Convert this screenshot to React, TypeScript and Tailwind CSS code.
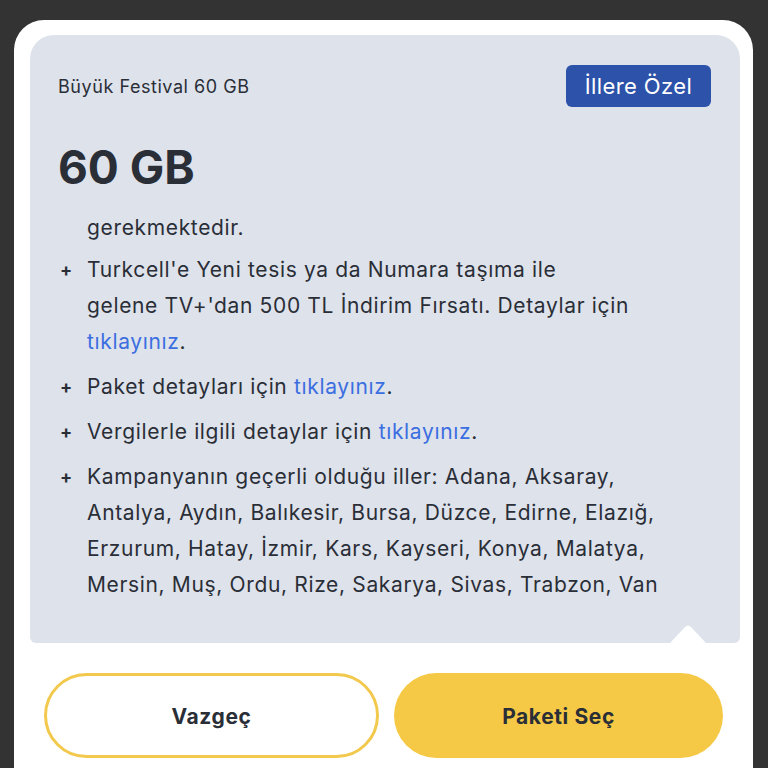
import React from 'react';

const font = { fontFamily: 'Inter, "Noto Sans", sans-serif' };

type Part = string | { link: string };

const items: Part[][][] = [
  [
    ["Turkcell'e Yeni tesis ya da Numara taşıma ile"],
    ["gelene TV+'dan 500 TL İndirim Fırsatı. Detaylar için"],
    [{ link: 'tıklayınız' }, '.'],
  ],
  [['Paket detayları için ', { link: 'tıklayınız' }, '.']],
  [['Vergilerle ilgili detaylar için ', { link: 'tıklayınız' }, '.']],
  [
    ['Kampanyanın geçerli olduğu iller: Adana, Aksaray,'],
    ['Antalya, Aydın, Balıkesir, Bursa, Düzce, Edirne, Elazığ,'],
    ['Erzurum, Hatay, İzmir, Kars, Kayseri, Konya, Malatya,'],
    ['Mersin, Muş, Ordu, Rize, Sakarya, Sivas, Trabzon, Van'],
  ],
];

function Line({ parts }: { parts: Part[] }) {
  return (
    <div className="h-[36px] leading-[36px] whitespace-nowrap">
      {parts.map((p, i) =>
        typeof p === 'string' ? (
          <span key={i}>{p}</span>
        ) : (
          <span key={i} className="text-[#3b6ee0]">
            {p.link}
          </span>
        )
      )}
    </div>
  );
}

export default function App() {
  return (
    <div className="w-[768px] h-[768px] overflow-hidden bg-[#333333] pt-[20px]" style={font}>
      <div className="ml-[14px] w-[739px] h-[800px] bg-white rounded-[30px] pt-[15px]">
        <div className="relative ml-4 mr-[13px] h-[608px] bg-[#dee2eb] rounded-t-[24px] rounded-b-[6px] pl-[28px] pr-[29px] pt-[30px] text-[#2a2e37]">
          <div className="flex items-center justify-between">
            <span className="text-[18px] tracking-[0.55px]">Büyük Festival 60 GB</span>
            <span className="h-[42px] w-[145px] flex items-center justify-center rounded-[6px] bg-[#2c52a9] text-white text-[22px] tracking-[0.4px]">
              İllere Özel
            </span>
          </div>
          <div className="mt-[32px] text-[46px] font-bold leading-[56px]">60 GB</div>
          <div className="mt-[15px] pl-[29px] text-[21px] tracking-[0.65px]">
            <div className="h-[36px] leading-[36px]">gerekmektedir.</div>
            <div className="mt-[6px] flex flex-col gap-[9px]">
              {items.map((lines, i) => (
                <div key={i} className="relative">
                  <span className="absolute left-[-27px] top-0 leading-[36px] text-[18px] font-bold">+</span>
                  {lines.map((parts, j) => (
                    <Line key={j} parts={parts} />
                  ))}
                </div>
              ))}
            </div>
          </div>
          <svg className="absolute bottom-0 left-[640px]" width="36" height="19" viewBox="0 0 36 19">
            <path d="M0 19 L15 3 Q18 0 21 3 L36 19 Z" fill="#ffffff" />
          </svg>
        </div>
        <div className="mt-[30px] flex gap-[15px] px-[30px]">
          <button className="flex-1 h-[85px] pt-[3px] rounded-full border-[3px] border-[#f2c94c] bg-white text-[21px] font-bold tracking-[0.6px] text-[#2a2e37]">
            Vazgeç
          </button>
          <button className="flex-1 h-[85px] pt-[3px] rounded-full bg-[#f5c945] text-[21px] font-bold tracking-[0.6px] text-[#2a2e37]">
            Paketi Seç
          </button>
        </div>
      </div>
    </div>
  );
}
